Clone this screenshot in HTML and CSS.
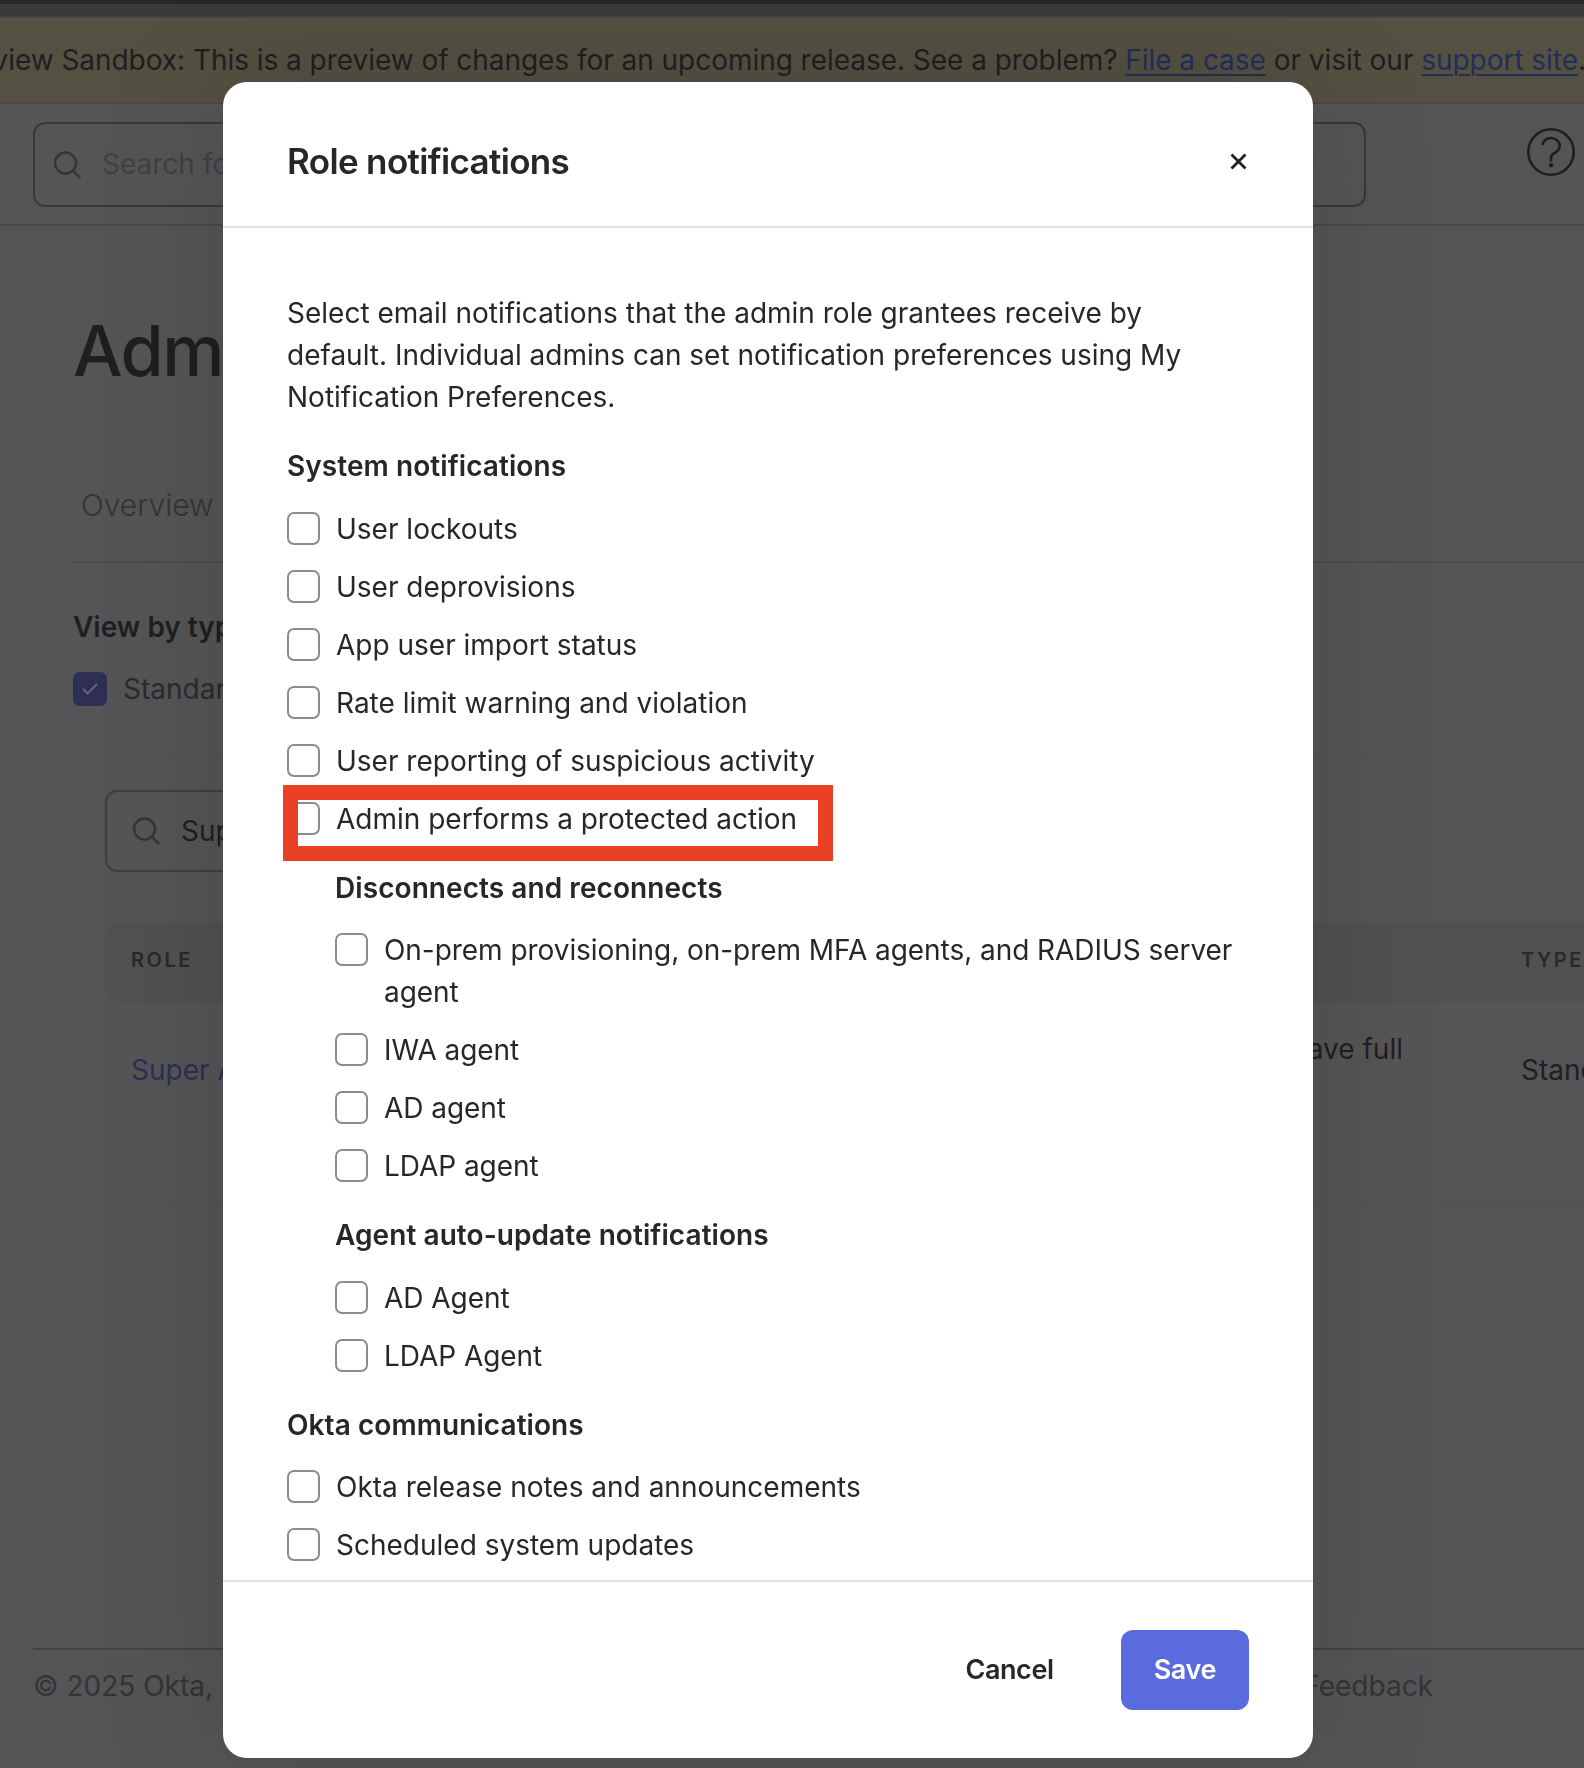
FILE: index.html
```
<!DOCTYPE html>
<html lang="en">
<head>
    <meta charset="UTF-8">
    <meta name="viewport" content="width=device-width, initial-scale=1.0">
    <title>Role notifications</title>
    <link rel="stylesheet" href="styles.css">
</head>
<body>
    <div class="page">
        <div class="topbar"></div>
        <div class="banner">
            <p>view Sandbox: This is a preview of changes for an upcoming release. See a problem? <a href="#">File a case</a> or visit our <a href="#">support site</a>.</p>
        </div>
        <header class="header">
            <div class="search">
                <svg class="search-icon" width="28" height="28" viewBox="0 0 28 28"><circle cx="11.5" cy="12" r="10.5"/><path d="M18.7 19.6L26.3 27"/></svg>
                <span>Search for</span>
            </div>
            <svg class="help" width="48" height="48" viewBox="0 0 48 48"><circle cx="24" cy="24" r="22.7"/><path d="M15.7 17c.2-4.200 3.800-7 8.300-7s8.700 3.200 8.700 8c0 3.800-2.400 5.500-5.200 7-2.500 1.300-3.500 2.500-3.500 4.800V33.500"/><circle class="dot" cx="24" cy="37.300" r="2.200"/></svg>
        </header>
        <main class="content">
            <h1>Admin</h1>
            <nav class="tabs"><a href="#">Overview</a></nav>
            <h2>View by type</h2>
            <div class="filter">
                <span class="checked"><svg width="16" height="12" viewBox="0 0 16 12"><path d="M1 6l4.500 4.500L15 1"/></svg></span>
                <span>Standard</span>
            </div>
            <section class="card">
                <div class="card-search">
                    <svg class="search-icon" width="28" height="28" viewBox="0 0 28 28"><circle cx="11.5" cy="12" r="10.5"/><path d="M18.7 19.6L26.3 27"/></svg>
                    <span>Super</span>
                </div>
                <div class="row head">
                    <span>Role</span>
                    <span></span>
                    <span>Type</span>
                </div>
                <div class="row">
                    <a href="#">Super Admin</a>
                    <p class="description">have full</p>
                    <span>Standard</span>
                </div>
            </section>
        </main>
        <footer class="footer">
            <span>© 2025 Okta,</span>
            <span>Feedback</span>
        </footer>
    </div>

    <div class="overlay">
        <div class="modal">
            <div class="modal-header">
                <h3>Role notifications</h3>
                <button class="close"><svg width="17" height="17" viewBox="0 0 17 17"><path d="M1.500 1.500l14 14M15.500 1.500l-14 14"/></svg></button>
            </div>
            <div class="modal-body">
                <p>Select email notifications that the admin role grantees receive by default. Individual admins can set notification preferences using My Notification Preferences.</p>

                <h4>System notifications</h4>
                <div class="options">
                    <label><input type="checkbox">User lockouts</label>
                    <label><input type="checkbox">User deprovisions</label>
                    <label><input type="checkbox">App user import status</label>
                    <label><input type="checkbox">Rate limit warning and violation</label>
                    <label><input type="checkbox">User reporting of suspicious activity</label>
                    <label class="marked"><input type="checkbox">Admin performs a protected action</label>
                </div>

                <div class="subgroup">
                    <h4>Disconnects and reconnects</h4>
                    <div class="options">
                        <label><input type="checkbox">On-prem provisioning, on-prem MFA agents, and RADIUS server agent</label>
                        <label><input type="checkbox">IWA agent</label>
                        <label><input type="checkbox">AD agent</label>
                        <label><input type="checkbox">LDAP agent</label>
                    </div>
                    <h4>Agent auto-update notifications</h4>
                    <div class="options">
                        <label><input type="checkbox">AD Agent</label>
                        <label><input type="checkbox">LDAP Agent</label>
                    </div>
                </div>

                <h4>Okta communications</h4>
                <div class="options">
                    <label><input type="checkbox">Okta release notes and announcements</label>
                    <label><input type="checkbox">Scheduled system updates</label>
                </div>
            </div>
            <div class="modal-footer">
                <button class="btn">Cancel</button>
                <button class="btn btn-primary">Save</button>
            </div>
        </div>
    </div>
</body>
</html>
```

FILE: styles.css
```
*{
    margin: 0;
    padding: 0;
    box-sizing: border-box;
}
body{
    font-family: Inter, "Liberation Sans", sans-serif;
    font-size: 28px;
    line-height: 42px;
    color: #1f1f20;
    background-color: #555557;
    overflow: hidden;
}
svg{
    display: block;
    flex: none;
    fill: none;
}

/* Page behind the dialog */
.page{
    display: flex;
    flex-direction: column;
    width: 1584px;
    height: 1768px;
    overflow: hidden;
    white-space: nowrap;
}
.topbar{
    flex: none;
    height: 18px;
    background-color: #3a3a3a;
    border-top: 4px solid #282828;
    border-bottom: 2px solid #444446;
}
.banner{
    display: flex;
    flex: none;
    justify-content: flex-end;
    height: 86px;
    padding-top: 21px;
    background-color: #545143;
    border-bottom: 2px solid #49494b;
}
.banner p{
    margin-right: -2px;
    letter-spacing: -0.04px;
}
.banner a{
    color: #222e58;
    text-decoration: underline;
    text-underline-offset: 4px;
    text-decoration-thickness: 2px;
}
.header{
    display: flex;
    flex: none;
    justify-content: space-between;
    height: 122px;
    padding: 18px 9px 0 33px;
    border-bottom: 2px solid #49494b;
}
.search{
    display: flex;
    align-items: center;
    gap: 20px;
    width: 1333px;
    height: 85px;
    padding-left: 19px;
    border: 2px solid #38383a;
    border-radius: 12px;
    color: #414143;
}
.search span{
    margin-top: -2px;
}
.search-icon{
    stroke: #353537;
    stroke-width: 2.4;
}
.help{
    margin-top: 6px;
    stroke: #1f1f20;
    stroke-width: 2.6;
}
.help .dot{
    fill: #1f1f20;
    stroke: none;
}
.content{
    flex: 1;
    padding-left: 73px;
}
h1{
    margin-top: 81px;
    font-size: 70px;
    font-weight: 500;
    line-height: 88px;
    letter-spacing: -1.6px;
}
.tabs{
    height: 168px;
    padding: 89px 8px 0;
    font-size: 30px;
    font-weight: 300;
    border-bottom: 2px solid #4c4c4e;
}
.tabs a{
    color: #343436;
    text-decoration: none;
}
h2{
    margin-top: 43px;
    font-size: 28px;
    font-weight: 600;
}
.filter{
    display: flex;
    align-items: center;
    gap: 16px;
    margin-top: 20px;
    color: #2b2b2c;
}
.checked{
    display: flex;
    align-items: center;
    justify-content: center;
    width: 34px;
    height: 34px;
    border-radius: 7px;
    background-color: #2d2f55;
}
.checked svg{
    stroke: #67677b;
    stroke-width: 1.8;
}
.card{
    width: 1700px;
    height: 445px;
    margin-top: 48px;
    padding: 31px;
    border: 1px solid #525254;
    border-radius: 32px;
}
.card-search{
    display: flex;
    align-items: center;
    gap: 20px;
    width: 700px;
    height: 82px;
    padding-left: 26px;
    border: 2px solid #3f3f41;
    border-radius: 12px;
    margin-bottom: 50px;
}
.row{
    display: grid;
    grid-template-columns: 340px 932px 1fr;
    align-items: center;
    height: 140px;
    padding: 0 0 4px 26px;
}
.row .description{
    margin-top: -42px;
    text-align: right;
}
.row > :last-child{
    padding-left: 118px;
}
.row a{
    color: #2c2f57;
    text-decoration: none;
}
.head{
    height: 80px;
    padding-bottom: 4px;
    border-radius: 16px;
    background-color: #515152;
    font-size: 20px;
    font-weight: 600;
    letter-spacing: 2.5px;
    text-transform: uppercase;
    color: #29292a;
}
.footer{
    display: flex;
    flex: none;
    justify-content: space-between;
    height: 120px;
    margin-left: 33px;
    padding: 15px 151px 0 0;
    border-top: 2px solid #434345;
    color: #343436;
}

/* Dialog */
.overlay{
    position: fixed;
    top: 0;
    left: 0;
    padding: 82px 0 0 223px;
}
.modal{
    display: flex;
    flex-direction: column;
    width: 1090px;
    height: 1676px;
    border-radius: 24px;
    background-color: #fff;
    color: #272727;
    box-shadow: 0 4px 130px rgba(0, 0, 0, 0.15);
    overflow: hidden;
}
.modal-header{
    display: flex;
    flex: none;
    align-items: center;
    justify-content: space-between;
    height: 146px;
    padding: 0 66px 0 64px;
    border-bottom: 2px solid #e1e1e1;
}
h3{
    margin-top: 13px;
    font-size: 35px;
    font-weight: 600;
    letter-spacing: -0.65px;
}
.close{
    margin-top: 15px;
    border: none;
    background: none;
    cursor: pointer;
}
.close svg{
    stroke: #1f1f20;
    stroke-width: 2.8;
}
.modal-body{
    flex: 1;
    padding: 64px 64px 0;
    overflow: hidden;
}
h4{
    margin: 27px 0 20.5px;
    font-size: 28px;
    font-weight: 600;
    letter-spacing: 0.07px;
}
.options{
    display: flex;
    flex-direction: column;
    gap: 16px;
}
.options label{
    display: flex;
    gap: 16px;
}
.options input{
    appearance: none;
    flex: none;
    width: 33px;
    height: 33px;
    margin-top: 4px;
    border: 2px solid #8c8c8c;
    border-radius: 7px;
    background-color: #fff;
}
.subgroup{
    padding-left: 48px;
}
.subgroup label{
    letter-spacing: -0.05px;
}
/* red frame drawn over the row */
.marked{
    position: relative;
}
.marked::after{
    content: "";
    position: absolute;
    top: -13px;
    left: -4px;
    width: 550px;
    height: 76px;
    border: 15px solid #ea4025;
    box-sizing: border-box;
}
.modal-footer{
    display: flex;
    flex: none;
    align-items: center;
    justify-content: flex-end;
    gap: 34px;
    height: 178px;
    padding-right: 64px;
    border-top: 2px solid #e1e1e1;
}
.btn{
    height: 80px;
    padding: 0 33px 2px;
    border: none;
    border-radius: 12px;
    background: none;
    color: #272727;
    font-family: inherit;
    font-size: 27px;
    font-weight: 600;
    letter-spacing: -0.4px;
    cursor: pointer;
}
.btn-primary{
    background-color: #5a6bde;
    color: #fff;
}
```
